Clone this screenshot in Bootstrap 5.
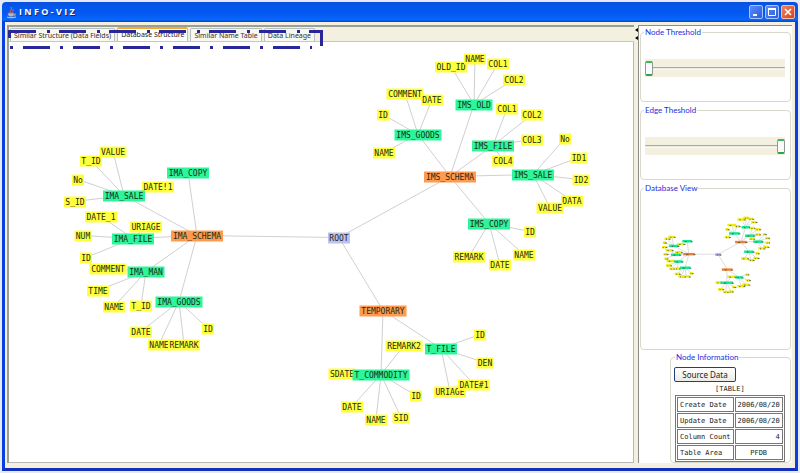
<!DOCTYPE html>
<html lang="en">
<head>
<meta charset="utf-8">
<meta name="viewport" content="width=device-width, initial-scale=1">
<title>INFO-VIZ</title>
<link rel="stylesheet" href="https://cdn.jsdelivr.net/npm/bootstrap@5.3.0/dist/css/bootstrap.min.css">
<style>
:root{--ui:"Noto Sans","Open Sans",sans-serif;--label:Lato,"Liberation Sans",sans-serif;--mono:"DejaVu Sans Mono","Liberation Mono",monospace;--cream:#f3f0df;--line:#d8d9cb;--gray:#9a9e96}
body{font-family:var(--ui);font-size:8px;line-height:10px;color:#222;background:#e6e9f8}
.app-window{min-height:100vh;padding:2px}
.frame{background:var(--cream);border:solid #0a3fe0;border-width:0 3px 3px;border-bottom-color:#1230b8}
.titlebar{height:20px;padding:0 3px 0 4px;background:linear-gradient(#0a50d8,#0458ee 25%,#0558f0 60%,#0768ff 88%,#0344c4);border-radius:4px 4px 0 0;color:#fff}
.titlebar h1{font-size:9px;line-height:12px;font-weight:700;font-family:"Open Sans",sans-serif;text-shadow:1px 1px #0a2a80;margin:0 0 0 2px}
.win-buttons{gap:2px}
.win-btn{width:14px;height:14px;padding:0;border:1px solid #a9c4fa;border-radius:2px;background:linear-gradient(135deg,#5c8df5,#2a5be0);line-height:0}
.win-btn.quit{background:linear-gradient(135deg,#ee8562,#d8401a);border-color:#f3c0b0}
.workspace{padding:3px 3px 5px 2px}
.left-pane{border-top:2px solid var(--gray);border-left:2px solid var(--gray);min-width:0}
.tabstrip{height:15px;padding-left:1px;gap:2px;border-bottom:1px solid #c3c9bd;padding-top:1px}
.tabstrip .nav-link{height:13px;padding:0 3px;border:1px solid #b4c0c0;border-bottom:0;border-radius:2px 2px 0 0;background:#f8f7f0;color:#333;font-size:7px;line-height:14px;white-space:nowrap}
.tabstrip .nav-link.active{height:14px;margin-top:-1px;border-top:2px solid #f0ae30;background:#fff;color:#222;line-height:12px}
.marker{position:absolute;left:-1px;top:3px;pointer-events:none;z-index:3}
.canvas{background:#fff;border-right:1px solid #b5bbb2;border-bottom:1px solid #b5bbb2;flex:1 1 0;min-height:400px}
.canvas svg{position:absolute;inset:0}
.splitter{width:4px;padding-top:3px;line-height:0}
.side{width:154px;background:#fff;border-top:1px solid #8b8e86;border-left:1px solid #8b8e86;padding:0 1px}
.group{border:1px solid var(--line);border-radius:4px;min-width:0;padding:0 4px;margin:0}
.group legend{float:none;width:auto;margin:0;padding:0 1px;font-family:var(--label);font-size:8px;line-height:12px;color:#1c2fd8}
.thresh{height:76px;margin-bottom:2px}
.thresh legend,.view legend{margin-left:-1px}
.range-box{background:var(--cream);height:18px;margin-top:21px;margin-right:1px}
.range-box input{appearance:none;-webkit-appearance:none;width:100%;height:18px;background:transparent;display:block;margin:0;padding:0}
.range-box input::-webkit-slider-runnable-track{height:3px;background:linear-gradient(#aaa 1px,#e4e2d8 1px,#fff);border-radius:1px}
.range-box input::-webkit-slider-thumb{-webkit-appearance:none;width:8px;height:15px;margin-top:-6px;background:#fafafa;border:1px solid #8c9c94;border-top:2px solid #3fb558;border-bottom:2px solid #2ba548;border-radius:2px}
.view{flex:1 1 0;margin-bottom:1px}
.view svg{display:block;width:108px;height:80px;margin:21px 0 0 17px}
.info{width:121px;margin-left:auto}
.info .btn{height:15px;width:62px;padding:0;border:1px solid #24407a;border-radius:2px;background:linear-gradient(#fff,#ecebe4);font-size:8px;line-height:12px;color:#222;display:block;margin:4px 0 0 -1px}
.attrs{width:108px;border:1px solid #777;border-collapse:separate;border-spacing:1px;font-family:var(--mono);font-size:7px;line-height:10px;color:#222;caption-side:top}
.attrs caption{caption-side:top;text-align:center;padding:2px 0 1px;color:#222;font-size:7px;line-height:10px}
.attrs th,.attrs td{height:15px;border:1px solid #777;padding:0 2px;font-weight:400;white-space:nowrap;vertical-align:middle}
.node text{font:8px var(--mono);fill:#1c2a14;text-anchor:middle}
.edge{stroke:#d0d0d0;stroke-width:1}
.mini .edge{stroke:#c8c8c8;stroke-width:3}
.mini .tick{stroke:#45483c;stroke-width:4}
</style>
<script src="https://cdn.jsdelivr.net/npm/bootstrap@5.3.0/dist/js/bootstrap.bundle.min.js"></script>
</head>
<body>
<div class="app-window d-flex flex-column">
  <header class="titlebar d-flex align-items-center">
    <svg width="11" height="13" viewBox="0 0 11 13" fill="none" aria-hidden="true"><path d="M5 7C2 5 7 4 5 1M7 7C5 5 8 5 7 3" stroke="#f06a48"/><path d="M2 7h6v2c0 2-5 2-6 0zM8 8c3-1 2 2 0 2" fill="#b9b6c9" stroke="#77789a" stroke-width=".7"/><path d="M1 11c2 1 6 1 9 0" stroke="#d0cddd"/></svg>
    <h1>I N F O - V I Z</h1>
    <div class="win-buttons d-flex ms-auto">
      <button class="win-btn" type="button" aria-label="Minimize"><svg width="12" height="12"><path d="M3 9h4" stroke="#fff" stroke-width="2"/></svg></button>
      <button class="win-btn" type="button" aria-label="Maximize"><svg width="12" height="12" fill="none" stroke="#fff"><path d="M2.500 3v6.500h7V3"/><path d="M2 3h8" stroke-width="2"/></svg></button>
      <button class="win-btn quit" type="button" aria-label="Close"><svg width="12" height="12" stroke="#fff" stroke-width="1.600"><path d="M3 3l6 6M9 3l-6 6"/></svg></button>
    </div>
  </header>
  <div class="frame flex-grow-1 d-flex flex-column">
    <div class="workspace flex-grow-1 d-flex">
      <main class="left-pane flex-grow-1 d-flex flex-column position-relative">
        <div class="tabstrip nav flex-nowrap align-items-start" role="tablist">
          <button class="nav-link" type="button" role="tab">Similar Structure (Data Fields)</button>
          <button class="nav-link active" type="button" role="tab" aria-selected="true">Database Structure</button>
          <button class="nav-link" type="button" role="tab">Similar Name Table</button>
          <button class="nav-link" type="button" role="tab">Data Lineage</button>
        </div>
        <svg class="marker" width="316" height="20" fill="none" stroke="#29269a" stroke-width="3" aria-hidden="true"><path d="M1.500 0v8"/><path d="M1 1.500h314" stroke-dasharray="27 11 3 9"/><path d="M2 17.500h302" stroke-dasharray="3 10 27 10"/><path d="M301 1.500h12.500V16"/></svg>
        <div class="canvas position-relative"><svg id="graph" width="100%" height="100%" viewBox="9 42 624 419" role="img" aria-label="Database structure graph"></svg></div>
      </main>
      <div class="splitter"><svg width="4" height="14" aria-hidden="true"><path d="M4 0v4L1 2zM4 8v4L1 10z"/></svg></div>
      <aside class="side d-flex flex-column">
        <fieldset class="group thresh"><legend><label for="nodeT">Node Threshold</label></legend><div class="range-box"><input id="nodeT" type="range" value="0"></div></fieldset>
        <fieldset class="group thresh"><legend><label for="edgeT">Edge Theshold</label></legend><div class="range-box"><input id="edgeT" type="range" value="100"></div></fieldset>
        <fieldset class="group view"><legend>Database View</legend><svg id="overview" class="mini" viewBox="66 48 526 384" role="img" aria-label="Overview of the graph"></svg></fieldset>
        <fieldset class="group info"><legend>Node Information</legend>
          <button class="btn" type="button">Source Data</button>
          <table class="attrs"><caption>[TABLE]</caption>
            <tr><th scope="row">Create Date</th><td>2006/08/20</td></tr>
            <tr><th scope="row">Update Date</th><td>2006/08/20</td></tr>
            <tr><th scope="row">Column Count</th><td class="text-end">4</td></tr>
            <tr><th scope="row">Table Area</th><td class="text-center">PFDB</td></tr>
          </table>
        </fieldset>
      </aside>
    </div>
  </div>
</div>
<script>
// Each node: [label, x, y, children]
const tree = ["ROOT",339,237,[
 ["IMA_SCHEMA",197,235,[
  ["IMA_COPY",188,172],
  ["IMA_SALE",124,195,[["VALUE",113,151],["T_ID",91,160],["No",78,179],["S_ID",75,201],["DATE!1",158,186]]],
  ["IMA_FILE",133,238,[["DATE_1",101,216],["URIAGE",146,226],["NUM",83,235],["ID",86,257]]],
  ["IMA_MAN",146,271,[["COMMENT",108,268],["TIME",98,290],["NAME",114,306],["T_ID",141,305]]],
  ["IMA_GOODS",179,301,[["DATE",141,331],["NAME",159,344],["REMARK",184,344],["ID",208,328]]]]],
 ["IMS_SCHEMA",450,176,[
  ["IMS_GOODS",418,134,[["COMMENT",405,93],["DATE",432,99],["ID",383,114],["NAME",384,152]]],
  ["IMS_OLD",474,104,[["OLD_ID",451,66],["NAME",475,58],["COL1",498,63],["COL2",514,79]]],
  ["IMS_FILE",493,145,[["COL1",507,108],["COL2",532,114],["COL3",532,139],["COL4",503,160]]],
  ["IMS_SALE",533,174,[["No",565,138],["ID1",579,157],["ID2",581,179],["DATA",572,200],["VALUE",550,207]]],
  ["IMS_COPY",489,223,[["ID",530,231],["NAME",524,254],["DATE",500,264],["REMARK",469,256]]]]],
 ["TEMPORARY",383,310,[
  ["T_FILE",441,348,[["URIAGE",450,391],["DATE#1",474,384],["ID",480,334],["DEN",485,362]]],
  ["T_COMMODITY",381,374,[["REMARK2",404,345],["SDATE",342,373],["DATE",352,406],["NAME",376,419],["SID",401,417],["ID",416,395]]]]]]];
const fills = ["#c0c0ea","#ff9a4e","#2cf59a","#ffff3c"];
const miniFills = ["#9a9ae0","#f08030","#10e890","#f0ec10"];
let edges = "", nodes = "", blocks = "";
function rect(x, y, w, h, fill) {
  return `<rect x="${x - w / 2}" y="${y - 5}" width="${w}" height="${h}" fill="${fill}"/>`;
}
function walk([label,x,y,kids = []], depth) {
  const w = label.length * 5 + 2;
  for (const k of kids) {
    edges += `<line class="edge" x1="${x}" y1="${y}" x2="${k[1]}" y2="${k[2]}"/>`;
    walk(k, depth + 1);
  }
  nodes += `<g class="node">${rect(x, y, w, 11, fills[depth])}<text x="${x}" y="${y + 3}">${label}</text></g>`;
  blocks += rect(x, y, w + 4, 12, miniFills[depth]) + `<path class="tick" d="M${x - w / 4} ${y + 3}h${w / 5}M${x + w / 2 - 3} ${y + 3}h9"/>`;
}
walk(tree, 0);
document.getElementById("graph").innerHTML = edges + nodes;
document.getElementById("overview").innerHTML = edges + blocks;
</script>
</body>
</html>
